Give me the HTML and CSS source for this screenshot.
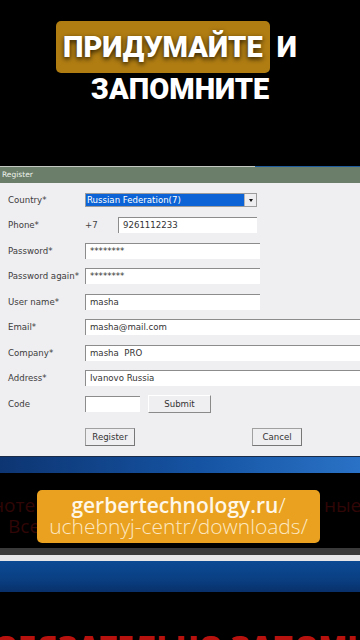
FILE: index.html
```html
<!DOCTYPE html>
<html lang="ru">
<head>
  <meta charset="UTF-8" />
  <meta name="viewport" content="width=device-width, initial-scale=1.0"/>
  <title>Придумайте и запомните</title>
  <link rel="stylesheet" href="styles.css">
</head>
<body>
  <div class="title">
    <div class="line1"><span class="hl">ПРИДУМАЙТЕ</span> И</div>
    <div class="line2">ЗАПОМНИТЕ</div>
  </div>

  <div class="window">
    <div class="topline"><span class="gray"></span><span class="blue"></span></div>
    <div class="caption">Register</div>
    <div class="form">
      <div class="row">
        <label>Country*</label>
        <div class="select"><span class="sel-text">Russian Federation(7)</span><span class="arrow"></span></div>
      </div>
      <div class="row">
        <label>Phone*</label>
        <div class="phone"><span class="code">+7</span><div class="input w-phone">9261112233</div></div>
      </div>
      <div class="row">
        <label>Password*</label>
        <div class="input w-mid">********</div>
      </div>
      <div class="row">
        <label>Password again*</label>
        <div class="input w-mid">********</div>
      </div>
      <div class="row">
        <label>User name*</label>
        <div class="input w-mid">masha</div>
      </div>
      <div class="row">
        <label>Email*</label>
        <div class="input w-full">masha@mail.com</div>
      </div>
      <div class="row">
        <label>Company*</label>
        <div class="input w-full">masha&nbsp; PRO</div>
      </div>
      <div class="row">
        <label>Address*</label>
        <div class="input w-full">Ivanovo Russia</div>
      </div>
      <div class="row">
        <label>Code</label>
        <div class="phone"><div class="input w-code"></div><button class="btn btn-submit">Submit</button></div>
      </div>
      <div class="actions">
        <button class="btn btn-box">Register</button>
        <button class="btn btn-box">Cancel</button>
      </div>
    </div>
  </div>
  <div class="taskbar"></div>

  <div class="promo-row">
    <div class="side side-left">
      <div class="bg-l1">ноте</div>
      <div class="bg-l2">Все</div>
    </div>
    <div class="promo">
      <div class="promo-1">gerbertechnology.ru<span class="thin">/</span></div>
      <div class="promo-2">uchebnyj-centr/downloads/</div>
    </div>
    <div class="side side-right">
      <div class="bg-r1">ные</div>
    </div>
  </div>

  <div class="strip-dark"></div>
  <div class="strip-light"></div>
  <div class="strip-blue"></div>

  <div class="bottom">
    <div class="red-text">ОБЯЗАТЕЛЬНО ЗАПОМНИТЕ</div>
  </div>
</body>
</html>
```

FILE: styles.css
```css
* {margin: 0; padding: 0; box-sizing: border-box;}
body {width: 360px; height: 640px; background-color: #000; overflow: hidden; font-family: 'DejaVu Sans', sans-serif;}

/* Title */
.title {height: 166px; padding-top: 21px; text-align: center; color: #fff; font-family: Roboto, sans-serif; font-weight: 900; font-size: 29px; text-shadow: 0 2px 5px rgba(0,0,0,0.8);}
.line1 {height: 52px; line-height: 52px;}
.hl {display: inline-block; background-color: #b07d12; border-radius: 5px; padding: 0 7px; margin-left: -7px;}
.line2 {line-height: 33px;}

/* Register window */
.window {background-color: #efeef1;}
.topline {display: flex; height: 1px;}
.topline .gray {width: 255px; background-color: #c4c8c2;}
.topline .blue {flex: 1; background-color: #1f5c9e;}
.caption {height: 16px; line-height: 16px; background-color: #6b7e6a; color: #eef2ec; font-size: 7.5px; padding-left: 2px;}
.form {padding: 4px 0 10px 8px;}
.row {display: grid; grid-template-columns: 77px 1fr; align-items: center; height: 25.5px;}
.row label {font-size: 8.6px; color: #3c3c3c;}
.select {display: flex; width: 172px; height: 14px; border: 1px solid #9c9c9c; background-color: #fff;}
.sel-text {flex: 1; background-color: #0b63d5; color: #fff; font-size: 8.6px; line-height: 12px; padding-left: 1px;}
.arrow {width: 12px; background-color: #eeeef0; border-left: 1px solid #b4b4b4; position: relative;}
.arrow::after {content: ""; position: absolute; left: 4px; top: 5px; border-left: 2px solid transparent; border-right: 2px solid transparent; border-top: 3px solid #111;}
.phone {display: flex; align-items: center;}
.code {width: 33px; font-size: 8.6px; color: #444;}
.input {height: 16px; background-color: #fff; border-top: 1px solid #8c8c8c; border-left: 1px solid #8c8c8c; font-size: 8.6px; color: #333; line-height: 15px; padding-left: 4px; white-space: nowrap;}
.w-phone {width: 139px;}
.w-mid {width: 175px;}
.w-full {width: 275px;}
.w-code {width: 55px;}
.btn {font-family: 'DejaVu Sans', sans-serif; font-size: 8.6px; color: #333; background-color: #efeef1; cursor: pointer;}
.btn-submit {width: 63px; height: 18px; margin-left: 8px; border: none; border-right: 1px solid #8a8a8a; border-bottom: 1px solid #8a8a8a; border-top: 1px solid #fff; border-left: 1px solid #fff;}
.actions {display: flex; gap: 117px; margin-top: 11px; padding-left: 77px;}
.btn-box {width: 50px; height: 18px; border: 1px solid #a0a0a0; border-right-color: #777; border-bottom-color: #777;}

.taskbar {height: 17px; border-top: 1px solid #1b2c48; background: linear-gradient(90deg, #0d3572 0%, #1553a2 55%, #2a72c6 100%);}

/* Promo */
.promo-row {display: flex; margin-top: 17px; height: 58px;}
.side {width: 37px; overflow: hidden; color: #300606; font-family: 'Open Sans', sans-serif; font-size: 19px; line-height: 21px; padding-top: 5px; white-space: nowrap;}
.bg-l1 {margin-left: -8px;}
.bg-l2 {margin-left: 8px;}
.side-right {flex: 1; padding-left: 4px;}
.promo {width: 283px; height: 53px; background-color: #e9a11f; border-radius: 5px; text-align: center; font-family: 'Open Sans', sans-serif; font-size: 21px; line-height: 21px; padding-top: 5px;}
.promo-1 {color: #fff7e8; font-weight: 600;}
.thin {font-weight: 300;}
.promo-2 {color: #fde8c2; font-weight: 300;}

.strip-dark {height: 7px; background-color: #3a3a3a;}
.strip-light {height: 6px; background-color: #e6e6e8;}
.strip-blue {height: 31px; background: linear-gradient(180deg, #0c4a94 0%, #0a3f82 60%, #08306a 100%);}

.bottom {height: 48px; overflow: hidden; padding-top: 40px;}
.red-text {color: #b8120f; font-family: 'Open Sans', sans-serif; font-weight: 800; font-size: 30px; line-height: 30px; white-space: nowrap; margin-left: -6px;}
```
